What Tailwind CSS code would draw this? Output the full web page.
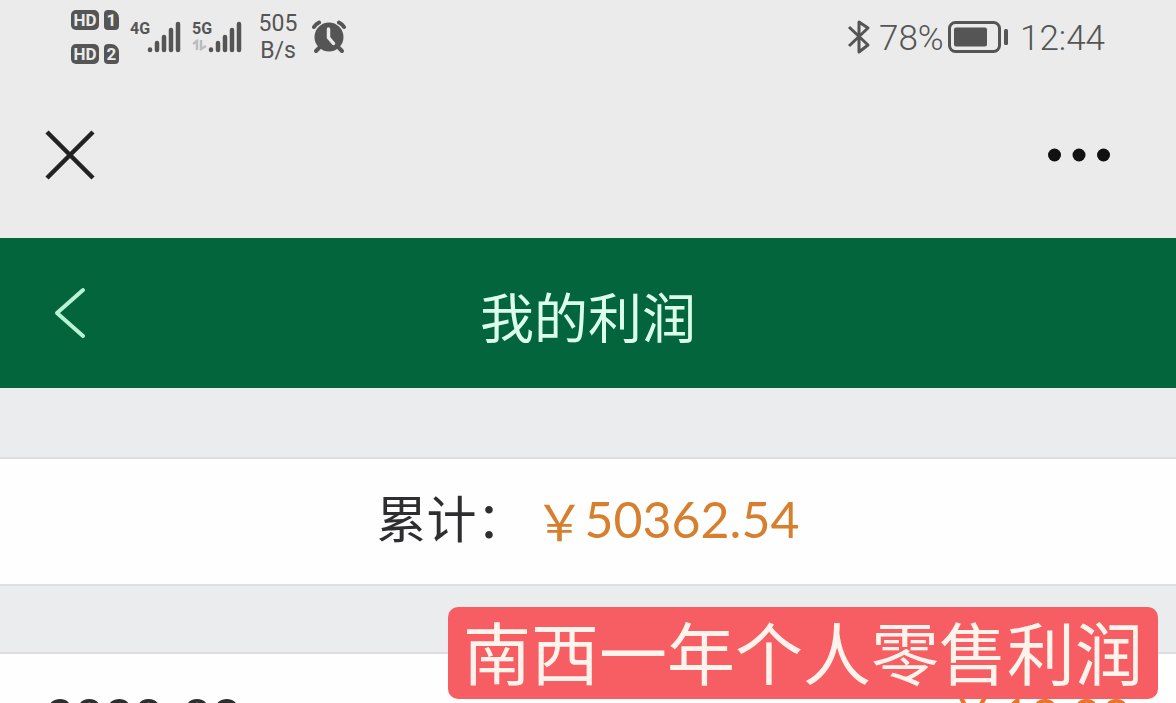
<!DOCTYPE html>
<html lang="zh-CN">
<head>
<meta charset="utf-8">
<meta name="viewport" content="width=device-width, initial-scale=1">
<title>我的利润</title>
<script src="https://cdn.jsdelivr.net/npm/@tailwindcss/browser@4"></script>
</head>
<body class="relative h-screen overflow-hidden bg-[#ebebeb] font-['Lato','Noto_Sans_CJK_SC',sans-serif] text-[#2e2e30]">
  <div class="flex h-[74px] items-center justify-between pl-[71px] pr-[71px] text-[#555555]">
    <div class="flex items-center">
      <div class="flex flex-col gap-[14px] font-['Roboto',sans-serif] text-[17px] font-bold leading-5 text-[#ebebeb]">
        <div class="flex gap-[5px]">
          <span class="flex h-5 w-7 items-center justify-center rounded-[5px] bg-[#555555]">HD</span>
          <span class="flex h-5 w-[15px] items-center justify-center rounded-[4px] rounded-tr-[8px] bg-[#555555]">1</span>
        </div>
        <div class="flex gap-[5px]">
          <span class="flex h-5 w-7 items-center justify-center rounded-[5px] bg-[#555555]">HD</span>
          <span class="flex h-5 w-[15px] items-center justify-center rounded-[4px] rounded-tr-[8px] bg-[#555555]">2</span>
        </div>
      </div>
      <div class="ml-[11px] flex h-8 w-[51px]">
        <span class="w-[17px] whitespace-nowrap font-['Liberation_Sans_Narrow','Roboto',sans-serif] text-base font-bold leading-4">4G</span>
        <svg class="h-8 w-[34px]" viewBox="0 0 34 32" fill="none" stroke="currentColor" stroke-width="4.500" stroke-linecap="round"><path d="M3 28.500v.5M10 22v7M17 16v13M24 9v20M31 3v26"/></svg>
      </div>
      <div class="ml-[11px] flex h-8 w-[51px]">
        <div class="flex w-[16px] flex-col gap-[2px]">
          <span class="whitespace-nowrap font-['Liberation_Sans_Narrow','Roboto',sans-serif] text-base font-bold leading-4">5G</span>
          <svg class="h-[12px] w-[16px]" viewBox="0 0 16 12" fill="none" stroke="#bcbcbc" stroke-width="2.500"><path d="M1 5l4-3v9M9 1v9l5-3"/></svg>
        </div>
        <svg class="h-8 w-[34px]" viewBox="0 0 34 32" fill="none" stroke="currentColor" stroke-width="4.500" stroke-linecap="round"><path d="M3 28.500v.5M10 22v7M17 16v13M24 9v20M31 3v26"/></svg>
      </div>
      <div class="ml-[14px] w-[42px] text-center font-['Roboto',sans-serif] text-[23px] leading-[27px]"><p>505</p><p>B/s</p></div>
      <svg class="ml-3 h-[34px] w-[36px]" viewBox="0 0 36 34" fill="none" stroke="currentColor" stroke-linecap="round" role="img" aria-label="闹钟"><circle cx="18" cy="17" r="14.500" fill="currentColor" stroke="none"/><path d="M8 28l-3 3M28 28l3 3" stroke-width="4"/><path d="M3 7q2-3 5-4.500M33 7q-2-3-5-4.500" stroke-width="4"/><path d="M17.500 9v8.500l5 6" stroke="#ebebeb" stroke-width="3.500"/></svg>
    </div>
    <div class="flex items-center font-['Roboto',sans-serif] text-[35px] font-light leading-10">
      <svg class="h-9 w-6" viewBox="0 0 24 36" fill="none" stroke="currentColor" stroke-width="3" stroke-linejoin="round" role="img" aria-label="蓝牙"><path d="M2 8l19 18-9 7V3l9 6L2 27"/></svg>
      <span class="ml-2 w-[69px] pt-1">78%</span>
      <svg class="h-[34px] w-[60px]" viewBox="0 0 60 34" role="img" aria-label="电量"><rect x="1.500" y="2.500" width="50" height="29" rx="6" fill="none" stroke="currentColor" stroke-width="3"/><rect x="6" y="7.500" width="33" height="19" rx="2" fill="currentColor"/><rect x="56" y="9" width="4" height="16" rx="1.500" fill="currentColor"/></svg>
      <span class="ml-[12px] pt-1">12:44</span>
    </div>
  </div>

  <div class="flex h-[164px] items-start justify-between pl-[44px] pr-[65px] pt-[55px] text-[#222222]">
    <button type="button" aria-label="关闭"><svg class="h-[52px] w-[52px]" viewBox="0 0 52 52" stroke="currentColor" stroke-width="4.500"><path d="M3 3l46 46M49 3L3 49"/></svg></button>
    <button type="button" aria-label="更多"><svg class="h-[52px] w-[64px]" viewBox="0 0 64 52" fill="#111111"><circle cx="7.500" cy="26" r="6.500"/><circle cx="32" cy="26" r="6.500"/><circle cx="56.500" cy="26" r="6.500"/></svg></button>
  </div>

  <header class="grid h-[150px] grid-cols-[1fr_auto_1fr] items-center bg-[#03653b] px-[54px] text-[#dcffea]">
    <button type="button" aria-label="返回" class="justify-self-start"><svg class="h-[52px] w-[32px]" viewBox="0 0 32 52" fill="none" stroke="#b9f3d3" stroke-width="4" stroke-linecap="round" stroke-linejoin="round"><path d="M29 3L3 26l26 23"/></svg></button>
    <h1 class="pt-3 text-[54px] leading-[60px]">我的利润</h1>
  </header>

  <main class="bg-[#ebecee] pt-[69px]">
    <section class="flex h-[129px] items-center justify-center border-y-2 border-[#dedee0] bg-[#fefefe] pb-[6px] text-[50px] leading-[60px]">
      <span>累计：</span>
      <span class="ml-2 flex text-[#d67f2f]"><span class="font-['Noto_Sans_CJK_SC',sans-serif]">￥</span>50362.54</span>
    </section>
    <section class="mt-[66px] flex justify-between border-t-2 border-[#dedee0] bg-[#fefefe] px-[45px] pt-8 text-[51px] leading-[60px]">
      <span>2020-02</span>
      <span class="text-[#e8742a]">¥ 10.00</span>
    </section>
  </main>

  <div class="absolute right-[18px] top-[607px] flex h-[92px] items-center rounded-[10px] bg-[#f65e63] px-[15px] font-['Noto_Sans_CJK_SC',sans-serif] text-[68px] leading-[88px] text-[#fff3ec]"><span class="pb-1">南西一年个人零售利润</span></div>
</body>
</html>
